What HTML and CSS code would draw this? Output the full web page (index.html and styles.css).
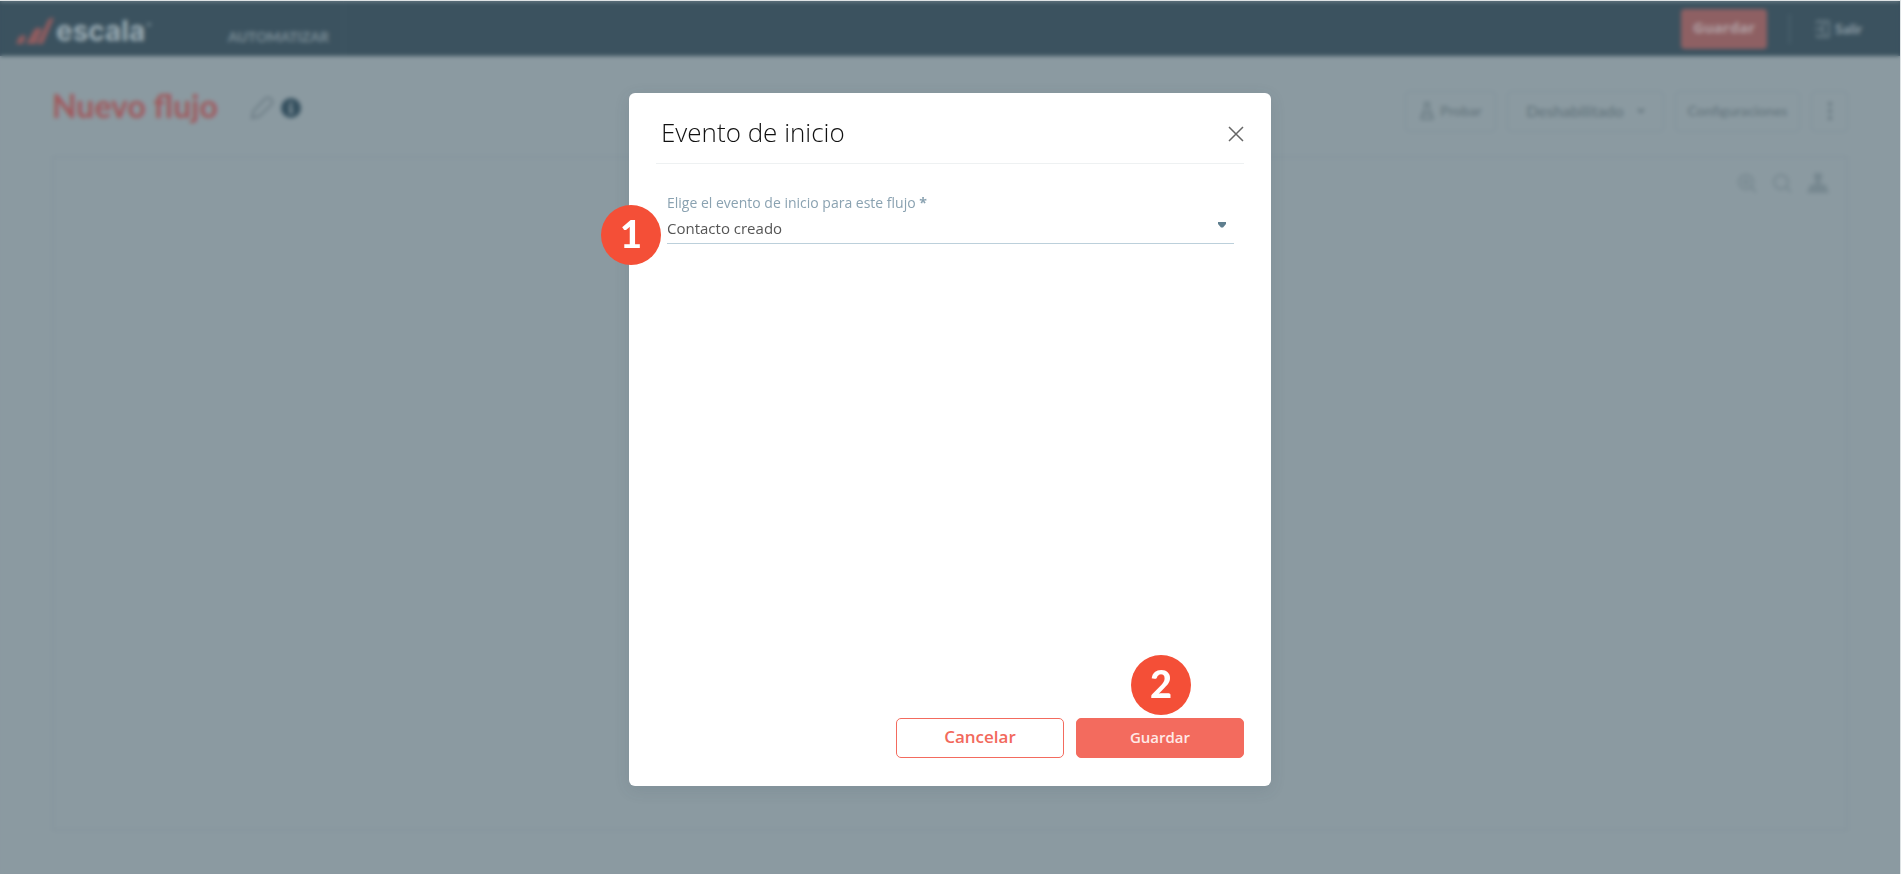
FILE: index.html
```html
<!DOCTYPE html>
<html lang="es">
<head>
<meta charset="utf-8">
<title>Escala – Nuevo flujo</title>
<link rel="stylesheet" href="styles.css">
</head>
<body>
<div class="app">
  <header class="topbar">
    <div class="logo">
      <svg class="logo-mark" viewBox="0 0 38 28" width="38" height="28" aria-hidden="true">
        <path d="M0 27 3 20q3-3 7-1l-3 8zM10 27l8-14q3-4 8-1l-6 15zM21 27 32 3q3-3 6-2L27 27z"/>
      </svg>
      <span class="logo-text">escala</span><span class="logo-dot"></span>
    </div>
    <nav class="nav"><a class="nav-link" href="#">AUTOMATIZAR</a></nav>
    <div class="top-actions">
      <button class="save" type="button">Guardar</button>
      <span class="divider"></span>
      <button class="exit" type="button">
        <svg viewBox="0 0 16 20" width="16" height="20" aria-hidden="true"><path d="M2 5V2h12v16H2v-3M0 10h9M6 7l3 3-3 3M6 5h5M6 15h5"/></svg>
        Salir
      </button>
    </div>
  </header>
  <main class="main">
    <div class="toolbar">
      <div class="heading">
        <h1 class="title">Nuevo flujo</h1>
        <svg class="pencil" viewBox="0 0 24 24" width="24" height="24" aria-hidden="true"><path d="M2 22l1.500-7L15 3q3-3 6 0t0 6L9 20.500z"/></svg>
        <svg class="info" viewBox="0 0 20 20" width="20" height="20" aria-hidden="true"><circle cx="10" cy="10" r="10"/><path d="M10 4v3M8 9h2v5M8 14.500h4"/></svg>
      </div>
      <div class="tools">
        <button class="tool probar" type="button">
          <svg viewBox="0 0 16 20" width="16" height="20" aria-hidden="true"><path d="M5 2h6M6 2v6L2 17q0 1 1 1h10q1 0 1-1L10 8V2M4 13h8"/></svg>
          Probar
        </button>
        <button class="tool estado" type="button">
          Deshabilitado
          <svg viewBox="0 0 8 6" width="8" height="6" aria-hidden="true"><path d="M1 1l3 3 3-3"/></svg>
        </button>
        <button class="tool config" type="button">Configuraciones</button>
        <button class="tool more" type="button" aria-label="Más opciones">
          <svg viewBox="0 0 6 20" width="6" height="20" aria-hidden="true"><circle cx="3" cy="3" r="2"/><circle cx="3" cy="10" r="2"/><circle cx="3" cy="17" r="2"/></svg>
        </button>
      </div>
    </div>
    <section class="canvas">
      <svg viewBox="0 0 20 20" width="20" height="20" aria-hidden="true"><path d="M14 14l5 5M5 9h8M9 5v8"/><circle cx="9" cy="9" r="7"/></svg>
      <svg viewBox="0 0 20 20" width="20" height="20" aria-hidden="true"><path d="M14 14l5 5"/><circle cx="9" cy="9" r="7"/></svg>
      <svg class="solid" viewBox="0 0 22 20" width="22" height="20" aria-hidden="true"><path d="M7 0h8v7h-2l1 4 5 1 3 8H0l3-8 5-1 1-4H7z"/></svg>
    </section>
  </main>
</div>

<div class="overlay">
  <form class="modal" role="dialog" aria-labelledby="modal-title">
    <span class="step step-one">1</span>
    <div class="modal-head">
      <h2 class="modal-title" id="modal-title">Evento de inicio</h2>
      <button class="close" type="button" aria-label="Cerrar">
        <svg viewBox="0 0 16 16" width="16" height="16" aria-hidden="true"><path d="M1 1l14 14M15 1L1 15"/></svg>
      </button>
    </div>
    <div class="field">
      <label class="label" for="evento">Elige el evento de inicio para este flujo <b>*</b></label>
      <div class="select-row">
        <select class="select" id="evento"><option>Contacto creado</option></select>
        <svg class="caret" viewBox="0 0 8 6" width="8" height="6" aria-hidden="true"><path d="M0 0h8v2L5 5.500H3L0 2z"/></svg>
      </div>
    </div>
    <div class="modal-foot">
      <button class="btn cancel" type="button">Cancelar</button>
      <button class="btn confirm" type="submit">Guardar<span class="step step-two">2</span></button>
    </div>
  </form>
</div>
</body>
</html>
```
FILE: styles.css
```css
* { box-sizing: border-box; }
body {
  margin: 0;
  background: #dde2e4;
  font-family: "Open Sans", "Noto Sans", sans-serif;
}
button, select { font-family: inherit; }
svg { flex: none; fill: none; stroke: currentColor; stroke-width: 2; }

.app {
  display: flex;
  flex-direction: column;
  min-height: 100vh;
  padding: 1px 1px 0 0;
}
.topbar {
  display: flex;
  align-items: center;
  height: 55px;
  padding: 0 38px 0 16px;
  background: #3b525f;
}
.logo { display: flex; align-items: center; width: 212px; padding-top: 4px; color: #9aabb3; }
.logo-mark { fill: #8f5c5f; stroke: none; }
.logo-text {
  margin-left: 2px;
  font: 700 28px/32px Inter, sans-serif;
}
.logo-dot { width: 4px; height: 3px; margin: 0 0 12px 2px; background: #6b808a; }
.nav { align-self: stretch; width: 116px; padding-top: 24px; border-right: 1px solid #425966; }
.nav-link {
  color: #7d8f98;
  font: 700 14px/18px Lato, sans-serif;
  text-decoration: none;
}
.top-actions { display: flex; align-items: center; margin-left: auto; }
.save {
  width: 86px;
  height: 40px;
  padding: 0 0 3px;
  border: 0;
  border-radius: 4px;
  background: #8e6063;
  color: #b2a2a6;
  font-size: 15px;
  font-weight: 700;
}
.divider { width: 1px; height: 30px; margin: 0 25px 0 22px; background: #566c78; }
.exit {
  display: flex;
  align-items: center;
  gap: 4px;
  padding: 0;
  border: 0;
  background: none;
  color: #8f9fa7;
  font: 700 14px/20px Lato, sans-serif;
}
.exit svg { stroke-width: 1; }
.main {
  display: flex;
  flex: 1;
  flex-direction: column;
  padding: 34px 52px 43px;
  background: #8b9aa1;
}
.toolbar { display: flex; align-items: center; margin-bottom: 24px; }
.heading { display: flex; align-items: center; padding-bottom: 6px; }
.title {
  margin: 0 32px 4px 0;
  color: #a0595d;
  font: 700 32px/32px Lato, sans-serif;
}
.pencil { margin-right: 7px; color: #6d7d86; }
.info { fill: #35505f; stroke: none; }
.info path { stroke: #8b9aa1; }
.tools { display: flex; gap: 11px; margin-left: auto; }
.tool {
  display: flex;
  align-items: center;
  justify-content: center;
  height: 41px;
  padding: 0;
  border: 1px solid #80919a;
  border-radius: 5px;
  background: none;
  color: #66777f;
  font: 600 14px/20px Lato, sans-serif;
}
.probar { gap: 5px; width: 91px; }
.probar svg { stroke-width: 1.500; }
.estado { gap: 13px; width: 157px; font-size: 16px; }
.config { width: 125px; }
.more { width: 37px; }
.more svg { fill: currentColor; stroke: none; }
.canvas {
  display: flex;
  flex: 1;
  align-items: flex-start;
  justify-content: flex-end;
  gap: 15px;
  padding: 15px 17px;
  border: 2px solid #86959d;
  color: #778890;
}
.canvas .solid { fill: currentColor; stroke: none; }

.overlay {
  position: fixed;
  inset: 1px 1px 0 0;
  display: flex;
  align-items: flex-start;
  justify-content: center;
  padding: 92px 0 88px;
  backdrop-filter: blur(2px);
}
.modal {
  position: relative;
  display: flex;
  flex-direction: column;
  width: 642px;
  height: 100%;
  padding: 0 27px 28px;
  border-radius: 6px;
  background: #fff;
  box-shadow: 0 4px 16px rgba(50, 75, 90, 0.12);
}
.modal-head {
  display: flex;
  align-items: center;
  justify-content: space-between;
  height: 71px;
  padding: 8px 0 0 5px;
  border-bottom: 1px solid #eef1f2;
}
.modal-title {
  margin: 0;
  color: #111;
  font-size: 26px;
  font-weight: 300;
  line-height: 36px;
}
.close { display: flex; padding: 4px 0 0; border: 0; background: none; color: #666; }
.close svg { stroke-width: 1.500; }
.field { padding: 29px 10px 0 11px; }
.label { display: block; color: #8aa2b1; font-size: 14px; font-weight: 500; line-height: 20px; }
.select-row { display: grid; align-items: center; border-bottom: 1px solid #bcd0db; }
.select {
  grid-area: 1 / 1;
  width: 100%;
  height: 30px;
  padding: 0;
  border: 0;
  appearance: none;
  background: none;
  color: #555;
  font-size: 15px;
}
.caret { grid-area: 1 / 1; justify-self: end; margin: 0 8px 6px 0; fill: #5f7f8f; stroke: none; }
.modal-foot { display: flex; justify-content: flex-end; gap: 12px; margin-top: auto; }
.btn {
  width: 168px;
  height: 40px;
  padding: 0 0 3px;
  border: 1px solid #f36b5e;
  border-radius: 5px;
  font-size: 15px;
  font-weight: 600;
}
.cancel { background: #fff; color: #f2695c; font-size: 17px; }
.confirm { position: relative; background: #f36b5e; color: #ffe9e6; }
.step {
  position: absolute;
  display: grid;
  place-items: center;
  width: 60px;
  height: 60px;
  padding-bottom: 4px;
  border-radius: 50%;
  background: #f44f37;
  color: #fff;
  font: 900 38px/40px Lato, sans-serif;
}
.step-one { top: 112px; left: -28px; }
.step-two { bottom: 42px; left: 54px; }
```
